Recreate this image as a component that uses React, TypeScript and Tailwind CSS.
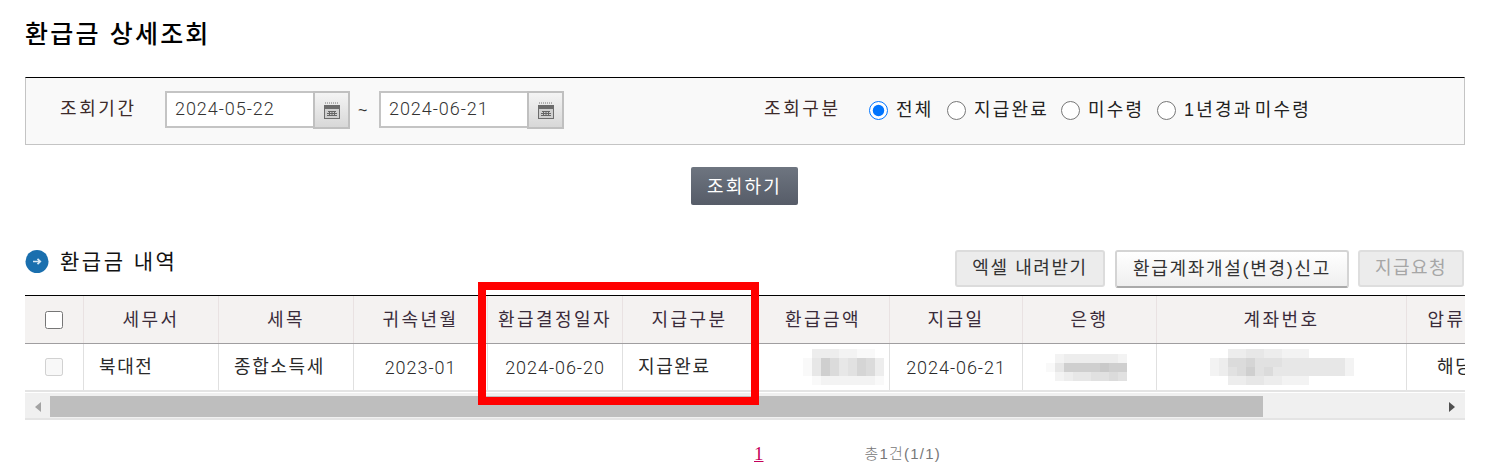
import React from "react";

const KR = "font-['Liberation_Sans','Noto_Sans_CJK_KR',sans-serif]";
const NUM = "font-['Roboto','Noto_Sans_CJK_KR',sans-serif] font-light tracking-[0.95px]";

const columns = [
  { label: "세무서", width: 135 },
  { label: "세목", width: 135 },
  { label: "귀속년월", width: 134 },
  { label: "환급결정일자", width: 135 },
  { label: "지급구분", width: 134 },
  { label: "환급금액", width: 133 },
  { label: "지급일", width: 133 },
  { label: "은행", width: 134 },
  { label: "계좌번호", width: 250 },
  { label: "압류", width: 80 },
];

const blurs = {
  amount: ["033322110", "148645763", "148645763", "012222221"],
  bank: ["023333332", "148888988", "023445565"],
  account: ["0033443322200000", "2366755544444442", "2356856444444442", "0033443322200000"],
};

function Mosaic({ rows }: { rows: string[] }) {
  return (
    <div className="flex flex-col">
      {rows.map((row, y) => (
        <div key={y} className="flex">
          {row.split("").map((c, x) => (
            <div
              key={x}
              className="h-[9px] w-[9px]"
              style={{ backgroundColor: `rgb(${255 - Number(c) * 6}, ${255 - Number(c) * 6}, ${255 - Number(c) * 6})` }}
            />
          ))}
        </div>
      ))}
    </div>
  );
}

function CalendarButton() {
  return (
    <button className="flex h-[38px] w-[37px] items-center justify-center border-2 border-[#c0c0c0] bg-gradient-to-b from-[#f4f4f4] to-[#d8d8d8]">
      <svg width="16" height="17" viewBox="0 0 16 17">
        <path d="M1 1h1M3 1h1M5 1h1M7 1h1M9 1h1M11 1h1M13 1h1" stroke="#777" strokeWidth="1" />
        <rect x="0" y="3" width="16" height="14" fill="#6c6c6c" />
        <rect x="1" y="7" width="14" height="9" fill="#cfcfcf" />
        <path d="M4 9.500h8M3 11.500h10M3 13.500h10M5.500 9v5M8 9v5M10.500 9v5" stroke="#666" strokeWidth="1" />
      </svg>
    </button>
  );
}

function DateField({ value }: { value: string }) {
  return (
    <div className="flex items-start">
      <input
        readOnly
        value={value}
        className={`h-[37px] w-[148px] border-2 border-r-0 border-[#c4c4c4] bg-white pb-[2px] pl-[8px] text-[18px] text-[#333] outline-none ${NUM}`}
      />
      <CalendarButton />
    </div>
  );
}

function Radio({ label, checked, width }: { label: string; checked?: boolean; width: string }) {
  return (
    <label className={`flex items-center gap-[8px] ${width}`}>
      <input
        type="radio"
        name="gubun"
        defaultChecked={checked}
        className="h-[19px] w-[19px] accent-[#0075ff]"
      />
      <span className="tracking-[2.2px] [word-spacing:-5px] text-[#222]">{label}</span>
    </label>
  );
}

function ActionButton({
  children,
  className,
}: {
  children: React.ReactNode;
  className: string;
}) {
  return (
    <button className={`h-[37px] rounded-[3px] border-2 text-[18px] ${className}`}>
      {children}
    </button>
  );
}

export default function App() {
  return (
    <div className={`relative h-[476px] w-[1487px] overflow-hidden bg-white pl-[25px] text-[18px] ${KR}`}>
      <h1 className="flex h-[77px] items-start pt-[15px] text-[25px] font-medium leading-[38px] tracking-[2.2px] text-black">
        환급금 상세조회
      </h1>

      <section className="flex h-[68px] w-[1440px] items-start border border-t-black border-x-[#c4c4c4] border-b-[#c4c4c4] bg-[#f9f9f9] pt-[13px]">
        <span className="ml-[34px] mt-[5px] w-[105px] tracking-[2.6px] text-[#3d2a2a]">조회기간</span>
        <DateField value="2024-05-22" />
        <span className="mx-[8px] mt-[8px] w-[13px] text-[16px] text-[#333]">~</span>
        <DateField value="2024-06-21" />
        <span className="ml-[200px] mt-[5px] w-[105px] tracking-[2.6px] text-[#3d2a2a]">조회구분</span>
        <div className="mt-[7px] flex h-[24px] items-center">
          <Radio label="전체" checked width="w-[78px]" />
          <Radio label="지급완료" width="w-[114px]" />
          <Radio label="미수령" width="w-[96px]" />
          <Radio label="1년경과 미수령" width="w-[180px]" />
        </div>
      </section>

      <div className="flex justify-center pr-[23px] pt-[22px]">
        <button className="h-[38px] w-[107px] rounded-[2px] bg-gradient-to-b from-[#6e7580] to-[#565c68] pt-[2px] text-[18px] tracking-[2.2px] text-white">
          조회하기
        </button>
      </div>

      <div className="mt-[45px] flex h-[45px] w-[1440px] items-start">
        <svg width="24" height="24" viewBox="0 0 24 24">
          <circle cx="12" cy="11.500" r="11.500" fill="#1a6fae" />
          <path d="M8 11.500h7M12.500 8.800l2.800 2.700-2.800 2.700" fill="none" stroke="#d8e8f4" strokeWidth="1.700" />
        </svg>
        <h2 className="ml-[11px] text-[21px] font-normal leading-[24px] tracking-[2.500px] text-[#111]">환급금 내역</h2>
        <div className="ml-auto flex items-start">
          <ActionButton className="w-[150px] border-[#dcdcdc] bg-[#ececec] tracking-[1.6px] text-[#333]">엑셀 내려받기</ActionButton>
          <ActionButton className="ml-[10px] h-[38px] w-[234px] border-[#d4d4d4] border-b-[#aaaaaa] bg-gradient-to-b from-white to-[#efefef] tracking-[1.7px] text-[#333]">
            환급계좌개설(변경)신고
          </ActionButton>
          <ActionButton className="ml-[9px] mr-px w-[106px] border-[#dedede] bg-[#ececec] tracking-[1.4px] text-[#a6a6a6]">지급요청</ActionButton>
        </div>
      </div>

      <div className="w-[1440px] overflow-hidden border-t border-black">
        <div className="flex h-[48px] w-max border-b border-[#a09ea0] bg-[#f4f2f1]">
          <div className="flex w-[58px] items-center justify-center">
            <input type="checkbox" className="h-[18px] w-[18px]" />
          </div>
          {columns.map((col) => (
            <div
              key={col.label}
              className="flex items-center justify-center border-l border-[#e9e2e2] pt-[2px] tracking-[2.400px] text-[#3a2c3a]"
              style={{ width: col.width }}
            >
              {col.label}
            </div>
          ))}
        </div>

        <div className="flex h-[48px] w-max border-b-2 border-[#e4e4e4] text-[#2a2a2a]">
          <div className="flex w-[58px] items-center justify-center">
            <input type="checkbox" disabled className="h-[18px] w-[18px]" />
          </div>
          <div className="flex w-[135px] items-center border-l border-[#e0e0e0] pl-[15px] pt-px tracking-[1.600px]">북대전</div>
          <div className="flex w-[135px] items-center border-l border-[#e0e0e0] pl-[15px] pt-px tracking-[1.600px]">종합소득세</div>
          <div className={`flex w-[134px] items-center justify-center border-l border-[#e0e0e0] pt-px ${NUM}`}>2023-01</div>
          <div className={`flex w-[135px] items-center justify-center border-l border-[#e0e0e0] pt-px ${NUM}`}>2024-06-20</div>
          <div className="flex w-[134px] items-center border-l border-[#e0e0e0] pl-[15px] pt-px tracking-[1.600px]">지급완료</div>
          <div className="flex w-[133px] items-center justify-end border-l border-[#e0e0e0] pr-[5px]">
            <Mosaic rows={blurs.amount} />
          </div>
          <div className={`flex w-[133px] items-center justify-center border-l border-[#e0e0e0] pt-px ${NUM}`}>2024-06-21</div>
          <div className="flex w-[134px] items-center justify-end border-l border-[#e0e0e0] pr-[29px]">
            <Mosaic rows={blurs.bank} />
          </div>
          <div className="flex w-[250px] items-center justify-center border-l border-[#e0e0e0]">
            <Mosaic rows={blurs.account} />
          </div>
          <div className="flex w-[80px] items-center whitespace-nowrap border-l border-[#e0e0e0] pl-[30px] pt-px tracking-[1.600px]">해당없음</div>
        </div>

        <div className="mt-px flex h-[27px] items-stretch border-b-2 border-[#e4e4e4] bg-[#f0f0f0] pb-px pt-[3px]">
          <div className="flex w-[25px] items-center justify-center">
            <div className="h-0 w-0 border-y-[5px] border-r-[6px] border-y-transparent border-r-[#a3a3a3]" />
          </div>
          <div className="w-[1213px] bg-[#bebebe]" />
          <div className="flex flex-1 items-center justify-end pr-[10px]">
            <div className="h-0 w-0 border-y-[5px] border-l-[6px] border-y-transparent border-l-[#505050]" />
          </div>
        </div>
      </div>

      <div className="relative mt-[22px] flex h-[24px] items-center">
        <a className="ml-[729px] font-['Liberation_Serif',serif] text-[19px] text-[#c4005a] underline">1</a>
        <span className="ml-[101px] text-[15px] font-light tracking-[1.200px] text-[#777]">총1건(1/1)</span>
      </div>

      {/* 강조 표시 */}
      <div className="absolute left-[478px] top-[282px] h-[123px] w-[281px] border-[8px] border-[#ff0000]" />
    </div>
  );
}
